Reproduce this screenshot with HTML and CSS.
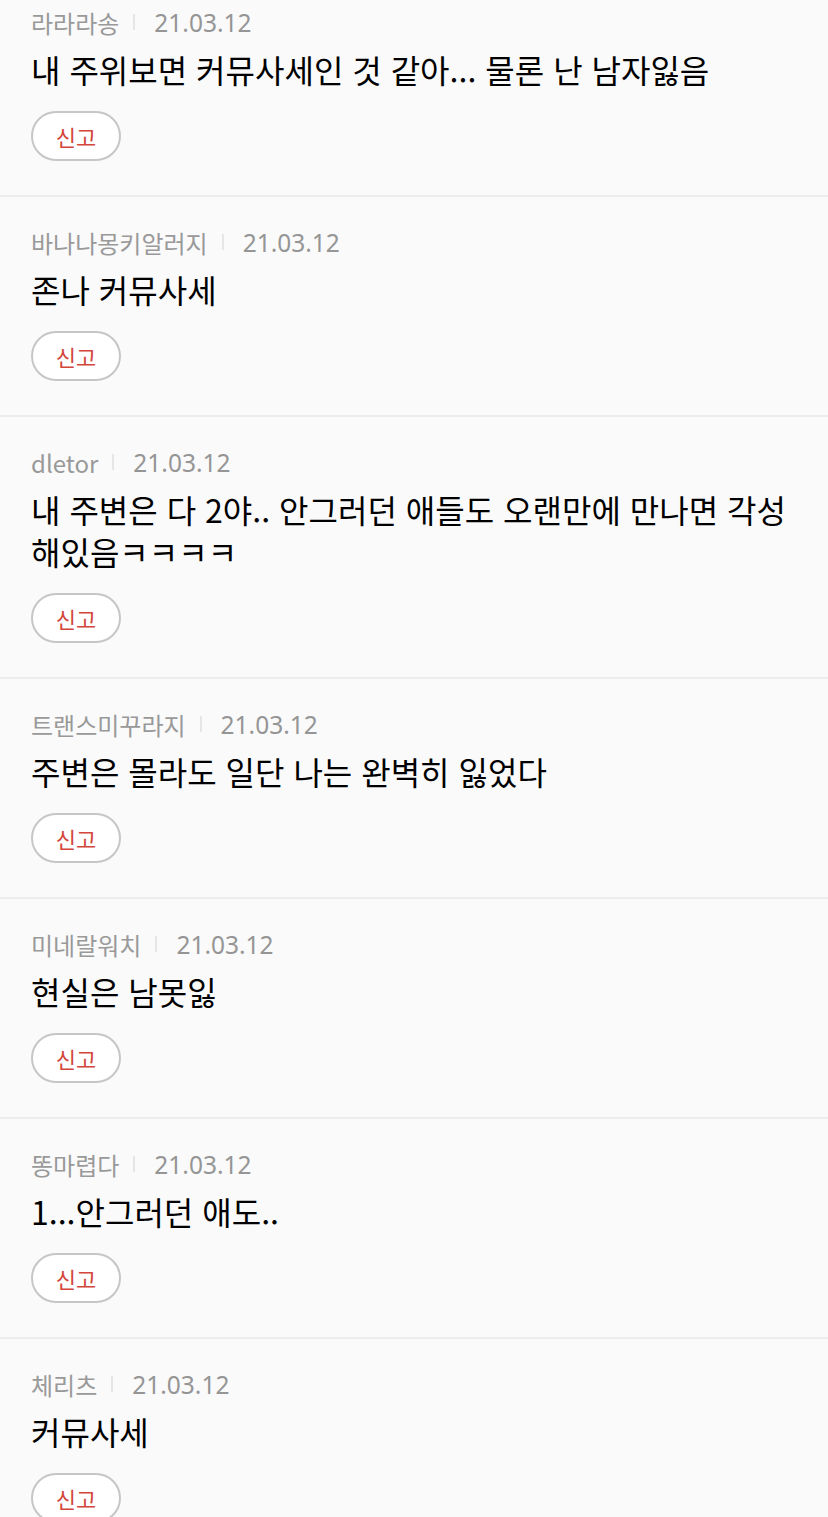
FILE: index.html
```html
<!DOCTYPE html>
<html lang="ko">
<head>
    <meta charset="UTF-8">
    <meta name="viewport" content="width=device-width, initial-scale=1.0">
    <title>댓글</title>
    <link rel="stylesheet" href="styles.css">
</head>
<body>
    <div class="comment-list">
        <div class="comment">
            <div class="comment-meta"><span class="nick">라라라송</span><span class="bar"></span><span class="date">21.03.12</span></div>
            <p class="comment-text">내 주위보면 커뮤사세인 것 같아... 물론 난 남자잃음</p>
            <button class="report-btn">신고</button>
        </div>
        <div class="comment">
            <div class="comment-meta"><span class="nick">바나나몽키알러지</span><span class="bar"></span><span class="date">21.03.12</span></div>
            <p class="comment-text">존나 커뮤사세</p>
            <button class="report-btn">신고</button>
        </div>
        <div class="comment">
            <div class="comment-meta"><span class="nick">dletor</span><span class="bar"></span><span class="date">21.03.12</span></div>
            <p class="comment-text">내 주변은 다 2야.. 안그러던 애들도 오랜만에 만나면 각성해있음ㅋㅋㅋㅋ</p>
            <button class="report-btn">신고</button>
        </div>
        <div class="comment">
            <div class="comment-meta"><span class="nick">트랜스미꾸라지</span><span class="bar"></span><span class="date">21.03.12</span></div>
            <p class="comment-text">주변은 몰라도 일단 나는 완벽히 잃었다</p>
            <button class="report-btn">신고</button>
        </div>
        <div class="comment">
            <div class="comment-meta"><span class="nick">미네랄워치</span><span class="bar"></span><span class="date">21.03.12</span></div>
            <p class="comment-text">현실은 남못잃</p>
            <button class="report-btn">신고</button>
        </div>
        <div class="comment">
            <div class="comment-meta"><span class="nick">똥마렵다</span><span class="bar"></span><span class="date">21.03.12</span></div>
            <p class="comment-text">1...안그러던 애도..</p>
            <button class="report-btn">신고</button>
        </div>
        <div class="comment">
            <div class="comment-meta"><span class="nick">체리츠</span><span class="bar"></span><span class="date">21.03.12</span></div>
            <p class="comment-text">커뮤사세</p>
            <button class="report-btn">신고</button>
        </div>
    </div>
</body>
</html>
```

FILE: styles.css
```css
body {
    font-family: "Noto Sans CJK KR", "Noto Sans", sans-serif;
    background-color: #fafafa;
    color: #000;
    margin: 0;
    padding: 0;
}
.comment-list {
    margin-top: -23px;
}
.comment {
    padding: 29px 31px 34px;
    border-bottom: 2px solid #ededed;
}
.comment-meta {
    display: flex;
    align-items: center;
    height: 32px;
    color: #999;
}
.nick {
    font-size: 24px;
}
.bar {
    width: 2px;
    height: 16px;
    background: #e6e6e6;
    margin: 0 19px 0 14px;
}
.date {
    font-family: "Noto Sans", sans-serif;
    font-size: 24.5px;
    color: #959595;
}
.comment-text {
    margin: 10px 0 21px;
    font-size: 32px;
    line-height: 42px;
    color: #000;
}
.report-btn {
    display: block;
    width: 90px;
    height: 50px;
    padding: 0;
    border: 2px solid #c6c6c6;
    border-radius: 25px;
    background: #fff;
    color: #d2463b;
    font-family: "Noto Sans CJK KR", sans-serif;
    font-size: 22px;
    cursor: pointer;
}
```
